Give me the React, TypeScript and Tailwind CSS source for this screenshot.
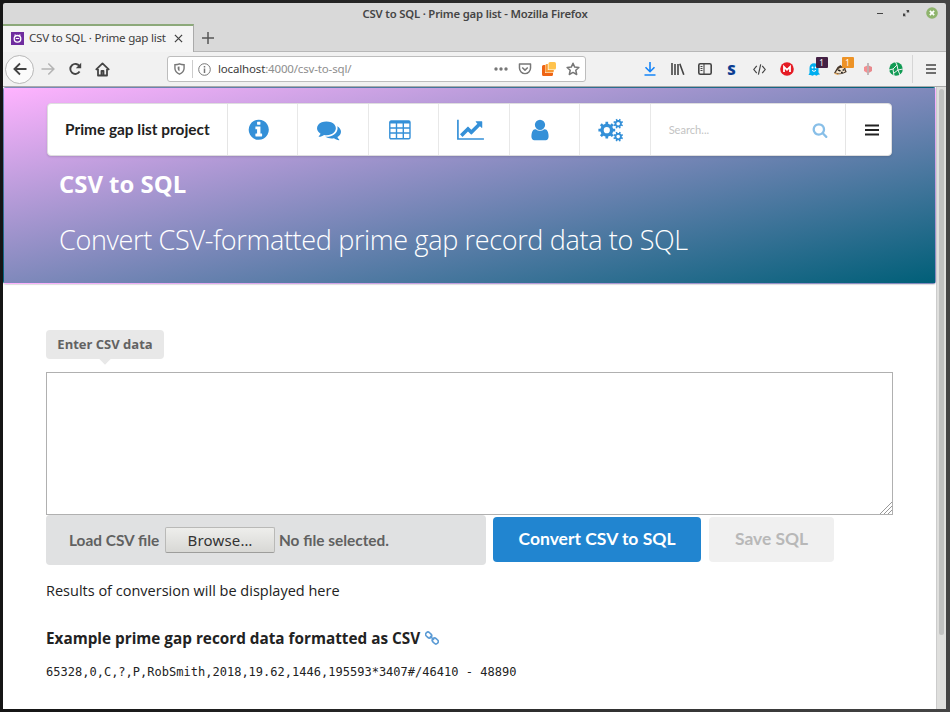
import React from 'react';

type IconProps = { d: string; box?: string; className?: string };

function Glyph({ d, box = '0 0 1792 1792', className = '' }: IconProps) {
  return (
    <svg viewBox={box} className={className} fill="currentColor">
      <path d={d} />
    </svg>
  );
}

const INFO =
  'M1152 1376v-160q0-14-9-23t-23-9h-96v-512q0-14-9-23t-23-9h-320q-14 0-23 9t-9 23v160q0 14 9 23t23 9h96v320h-96q-14 0-23 9t-9 23v160q0 14 9 23t23 9h448q14 0 23-9t9-23zm-128-896v-160q0-14-9-23t-23-9h-192q-14 0-23 9t-9 23v160q0 14 9 23t23 9h192q14 0 23-9t9-23zm640 416q0 209-103 385.5t-279.5 279.5-385.5 103-385.5-103-279.5-279.5-103-385.5 103-385.5 279.5-279.5 385.5-103 385.5 103 279.5 279.5 103 385.5z';
const COMMENTS =
  'M1408 768q0 139-94 257t-256.5 186.5-353.5 68.5q-86 0-176-16-124 88-278 128-36 9-86 16h-3q-11 0-20.5-8t-11.5-21q-1-3-1-6.5t.5-6.5 2-6l2.5-5 3.5-5.5 4-5 4.5-5 4-4.5q5-6 23-25t26-29.5 22.5-29 25-38.5 20.5-44q-124-72-195-177t-71-224q0-139 94-257t256.5-186.5 353.5-68.5 353.5 68.5 256.5 186.5 94 257zm384 256q0 120-71 224.5t-195 176.5q10 24 20.5 44t25 38.5 22.5 29 26 29.5 23 25q1 1 4 4.5t4.5 5 4 5 3.5 5.5l2.5 5 2 6 .5 6.5-1 6.5q-3 14-13 22t-22 7q-50-7-86-16-154-40-278-128-90 16-176 16-271 0-472-132 58 4 88 4 161 0 309-45t264-129q125-92 192-212t67-254q0-77-23-152 129 71 204 178t75 230z';
const CHART =
  'M2048 1536v128h-2048v-1536h128v1408h1920zm-128-1248v435q0 21-19.5 29.5t-35.5-7.5l-121-121-633 633q-10 10-23 10t-23-10l-233-233-416 416-192-192 585-585q10-10 23-10t23 10l233 233 464-464-121-121q-16-16-7.5-35.5t29.5-19.5h435q14 0 23 9t9 23z';
const USER =
  'M1536 1399q0 109-62.5 187t-150.5 78h-854q-88 0-150.5-78t-62.5-187q0-85 8.5-160.5t31.5-152 58.5-131 94-89 134.5-34.5q131 128 313 128t313-128q76 0 134.5 34.5t94 89 58.5 131 31.5 152 8.5 160.5zm-256-887q0 159-112.5 271.5t-271.5 112.5-271.5-112.5-112.5-271.5 112.5-271.5 271.5-112.5 271.5 112.5 112.5 271.5z';
const SEARCH =
  'M1216 832q0-185-131.5-316.5t-316.5-131.5-316.5 131.5-131.5 316.5 131.5 316.5 316.5 131.5 316.5-131.5 131.5-316.5zm512 832q0 52-38 90t-90 38q-54 0-90-38l-343-342q-179 124-399 124-143 0-273.5-55.5t-225-150-150-225-55.5-273.5 55.5-273.5 150-225 225-150 273.5-55.5 273.5 55.5 225 150 150 225 55.5 273.5q0 220-124 399l343 343q37 37 37 90z';

// Outline of a gear with trapezoid teeth and a round hole.
function gear(cx: number, cy: number, outer: number, inner: number, hole: number, teeth: number, turn = 0) {
  const pts: string[] = [];
  for (let i = 0; i < teeth; i++) {
    const step = (Math.PI * 2) / teeth;
    const a = i * step + turn;
    const at = (r: number, t: number) =>
      `${(cx + r * Math.cos(a + t * step)).toFixed(2)} ${(cy + r * Math.sin(a + t * step)).toFixed(2)}`;
    pts.push(at(inner, -0.27), at(outer, -0.2), at(outer, 0.2), at(inner, 0.27));
  }
  return `M${pts.join('L')}ZM${cx + hole} ${cy}A${hole} ${hole} 0 1 0 ${cx - hole} ${cy}A${hole} ${hole} 0 1 0 ${cx + hole} ${cy}Z`;
}

function Cogs() {
  return (
    <svg viewBox="0 0 26 24" className="h-6 w-[26px]" fill="currentColor" fillRule="evenodd">
      <path d={gear(8.8, 12.2, 8.5, 6.5, 3.1, 8)} />
      <path d={gear(20.2, 5.7, 5, 3.7, 1.8, 8, 0.4)} />
      <path d={gear(20.2, 18.6, 5, 3.7, 1.8, 8, 0.4)} />
    </svg>
  );
}

function TableIcon() {
  return (
    <svg viewBox="0 0 22 20" className="h-5 w-[22px]" fill="none" stroke="currentColor" strokeWidth="1.4">
      <rect x=".8" y="1" width="20.2" height="17.8" rx="1.3" />
      <path d="M1 2.2h20" strokeWidth="2.4" />
      <path d="M1 8h20M1 13h20M7.5 2v17M14.3 2v17" />
    </svg>
  );
}

const NAV = [
  <Glyph d={INFO} className="size-[23.5px]" />,
  <Glyph d={COMMENTS} className="size-[24px]" />,
  <TableIcon />,
  <Glyph d={CHART} box="0 0 2048 1792" className="h-[23.5px] w-[27px]" />,
  <Glyph d={USER} className="size-[24px]" />,
  <Cogs />,
];

function TitleBar() {
  return (
    <div className="relative h-[21px] shrink-0">
      <div className="pt-[2px] pl-px text-center text-[11.3px] leading-[17px] font-semibold tracking-[-0.18px] text-[#454545]">
        CSV to SQL · Prime gap list - Mozilla Firefox
      </div>
      <div className="absolute top-[3px] right-[8px] flex h-[14px] items-center text-[#444]">
        <span className="mt-px mr-[20px] h-[1.5px] w-[6px] bg-current" />
        <svg viewBox="0 0 8 8" className="mr-[16px] size-[7px]" fill="currentColor">
          <path d="M3.5 0H7v3.5L5.8 2.4 4.8 3.2 4 2.3l.7-.8zM0 3.4 1.2 4.6 2 3.8l1 .8-.8 1L3.5 7H0z" />
        </svg>
        <svg viewBox="0 0 14 14" className="size-[12px]">
          <circle cx="7" cy="7" r="6.8" fill="#8fb46d" />
          <path d="m4.5 4.5 5 5m0-5-5 5" stroke="#fff" strokeWidth="2" />
        </svg>
      </div>
    </div>
  );
}

function TabStrip() {
  return (
    <div className="flex h-[28px] shrink-0">
      <div className="flex w-[191px] items-center border-t-2 border-r border-t-[#8ca97a] border-r-[#aaa] bg-[#f4f4f4] pb-[2px] pl-2">
        <svg viewBox="0 0 13 13" className="size-[13px]">
          <path fill="#6f2c9f" d="M0 0h13v13H0z" />
          <circle cx="6.5" cy="6.8" r="3.3" fill="none" stroke="#fff" strokeWidth="1.3" />
          <path d="M4.8 6.5h3.4M4.5 3.6 3.8 2.5M8.5 3.6l.7-1.1" stroke="#fff" strokeWidth="1.2" />
        </svg>
        <span className="ml-[5px] w-[137px] text-[11.6px] tracking-[-0.24px] whitespace-nowrap text-[#3e3e3e]">
          CSV to SQL · Prime gap list
        </span>
        <svg viewBox="0 0 10 10" className="ml-[8px] size-[9px]" stroke="#444" strokeWidth="1.4">
          <path d="m1 1 8 8m0-8-8 8" />
        </svg>
      </div>
      <div className="flex flex-1 items-center border-b border-[#b7b7b7] pl-2">
        <svg viewBox="0 0 12 12" className="size-[12px]" stroke="#555" strokeWidth="1.5">
          <path d="M6 0v12M0 6h12" />
        </svg>
      </div>
    </div>
  );
}

function Toolbar() {
  const line = { fill: 'none', stroke: '#444', strokeWidth: 1.6 };
  return (
    <div className="relative flex h-[35px] shrink-0 items-center border-b border-[#aaa] bg-[#f1f1f1]">
      <span className="ml-[2px] flex size-[29px] items-center justify-center rounded-full border border-[#b8b8b8] bg-[#fbfbfb]">
        <svg viewBox="0 0 14 14" className="size-[14px]" {...line} strokeWidth={1.8}>
          <path d="M13.5 7h-12M7 1.5 1.4 7 7 12.5" />
        </svg>
      </span>
      <svg viewBox="0 0 14 14" className="ml-[7px] size-[14px]" fill="none" stroke="#b4b4b4" strokeWidth="1.6">
        <path d="M.5 7h12M7.3 1.5 12.8 7l-5.5 5.5" />
      </svg>
      <svg viewBox="0 0 14 14" className="ml-[13px] size-[14px]" {...line} strokeWidth={1.9}>
        <path d="M11.6 9.5A5 5 0 1 1 11.5 4.2" />
        <path d="M13.2.8v5.4H7.8z" fill="#444" stroke="none" />
      </svg>
      <svg viewBox="0 0 15 15" className="ml-[13px] size-[15px]" {...line} strokeWidth={1.8}>
        <path d="M.8 7.8 7.5 1.4l6.7 6.4M3 7v6.5h9V7M6.5 13.5V9h2v4.5" strokeLinejoin="round" />
      </svg>
      <div className="ml-[57px] flex h-[26px] w-[419px] items-center rounded-[3px] border border-[#bdbdbd] bg-white text-[#777]">
        <svg viewBox="0 0 12 13" className="ml-[6px] h-[12px] w-[11px]" fill="none" stroke="currentColor" strokeWidth="1.5">
          <path d="M1 1.8Q4 1.8 6 .9q2 .9 5 .9v4Q11 10 6 12.1 1 10 1 5.8z" />
          <path d="M4 4v2.3Q4 8 6 9V3.8z" fill="currentColor" stroke="none" />
        </svg>
        <span className="ml-[7px] h-[18px] w-px bg-[#ccc]" />
        <svg viewBox="0 0 13 13" className="ml-[5px] size-[13px]" fill="none" stroke="currentColor">
          <circle cx="6.5" cy="6.5" r="5.8" />
          <path d="M6.5 5.5V10M6.5 3v1.4" strokeWidth="1.5" />
        </svg>
        <span className="ml-[7px] w-[140px] text-[11.5px] tracking-[-0.16px] whitespace-nowrap text-[#8e8e8e]">
          <span className="text-[#3c3c3c]">localhost</span>:4000/csv-to-sql/
        </span>
        <svg viewBox="0 0 14 4" className="ml-[136px] h-[4px] w-[14px]" fill="currentColor">
          <circle cx="2" cy="2" r="1.7" />
          <circle cx="7" cy="2" r="1.7" />
          <circle cx="12" cy="2" r="1.7" />
        </svg>
        <svg viewBox="0 0 14 13" className="ml-[10px] h-[12px] w-[14px]" fill="none" stroke="currentColor" strokeWidth="1.6">
          <path d="M1 1h12v4.5a6 6 0 0 1-12 0zM4 4.8l3 2.9 3-2.9" strokeLinejoin="round" />
        </svg>
        <svg viewBox="0 0 14 14" className="ml-[10px] size-[14px]">
          <path d="M0 4.5Q0 3 1.5 3H3v8h8v1.5q0 1.5-1.5 1.5h-8Q0 14 0 12.5z" fill="#ee6415" />
          <path d="M3.3 3.5Q3.3 2 4.8 2h1v6h6v1q0 1.5-1.5 1.5h-7z" fill="#f99630" />
          <path d="M6.5 1.5Q6.5 0 8 0h4.5Q14 0 14 1.5V6q0 1.5-1.5 1.5h-6z" fill="#ffc34d" />
        </svg>
        <svg viewBox="0 0 14 14" className="ml-[10px] size-[14px]" fill="none" stroke="currentColor" strokeWidth="1.5">
          <path d="m7 1.2 1.7 3.9 4.2.4-3.1 2.8.9 4.2L7 10.4l-3.7 2.1.9-4.2L1.1 5.5l4.2-.4z" strokeLinejoin="round" />
        </svg>
      </div>

      <div className="ml-[58px] flex items-center">
        <svg viewBox="0 0 12 14" className="h-[14px] w-[12px]" fill="none" stroke="#1685f8" strokeWidth="1.6">
          <path d="M6 0v9.5M1.5 5.2 6 9.7l4.5-4.5M.5 13h11" />
        </svg>
        <svg viewBox="0 0 14 12" className="ml-[14.5px] h-[12px] w-[14px]" {...line}>
          <path d="M1 0v12M4 1v11M7 1v11M8.8.8l4 11" />
        </svg>
        <svg viewBox="0 0 14 12" className="ml-[13px] h-[12px] w-[14px]" {...line}>
          <rect x=".8" y=".8" width="12.4" height="10.4" rx="1.5" />
          <path d="M6 1v10M2.5 3.5h2M2.5 5.5h2M2.5 7.5h2" strokeWidth="1.1" />
        </svg>
        <span className="ml-[14px] w-[12px] text-center font-['Noto_Sans',sans-serif] text-[14.5px] leading-[15px] font-black text-[#0b3d91]">S</span>
        <svg viewBox="0 0 14 12" className="ml-[15px] h-[11px] w-[13px]" {...line} strokeWidth={1.3}>
          <path d="M4 2 .8 6 4 10M10 2l3.2 4-3.2 4M8.3.5 5.8 11.5" />
        </svg>
        <svg viewBox="0 0 14 14" className="ml-[14px] size-[14px]">
          <circle cx="7" cy="7" r="6.8" fill="#e51b24" />
          <path d="M4 10V4.8l3 3 3-3V10" fill="none" stroke="#fff" strokeWidth="1.8" />
        </svg>
        <div className="relative ml-[14px] h-[14px] w-[12px]">
          <svg viewBox="0 0 12 14" className="h-[14px] w-[12px]">
            <path d="M1.5 6a4.5 4.8 0 0 1 9 0v4.5l1.5 2-2 .2-1.5 1-2-1-2 1-2-.8-2 .1 1-2z" fill="#00aef0" />
            <circle cx="4.5" cy="5.5" r="1" fill="#fff" />
            <circle cx="7.7" cy="5.5" r="1" fill="#fff" />
            <path d="M4 8.4q2 2 4 0" stroke="#fff" fill="none" />
          </svg>
          <span className="absolute -top-[5px] left-[8px] h-[11px] w-[12px] rounded-[1px] bg-[#432044] text-center text-[8px] leading-[11px] text-white">1</span>
        </div>
        <div className="relative ml-[14px] h-[14px] w-[14px]">
          <svg viewBox="0 0 14 14" className="size-[14px]">
            <path d="M0 11 3.5 5l3-2 1.5 1.6L11.5 4v3l1.2 3-2.7 1.2Q7 12.6 4 12z" fill="#4a3a2c" />
            <path d="M1.5 10.4 5 6.4l2-.6 3 .4 1.2 3.3-3 1.8-3.4.2z" fill="#f6e6cf" />
            <path d="m4.2 8 2.3 1M8.6 8.4l1.8-.8M7 10.5h1.8" stroke="#222" strokeWidth="1.5" />
            <path d="m.5 11.4 4 1.2" stroke="#e49a3b" />
          </svg>
          <span className="absolute -top-[5px] left-[8px] h-[11px] w-[12px] rounded-[1px] bg-[#ed9327] text-center text-[8px] leading-[11px] text-white">1</span>
        </div>
        <svg viewBox="0 0 10 12" className="ml-[15px] h-[12px] w-[10px]">
          <path d="M4.3 2.5 1 4v4l3.3 2z" fill="#f58e91" />
          <path d="M5.7 2.5 9 4v4L5.7 10z" fill="#e8898e" />
          <path d="M5 0v12" stroke="#a79a9b" strokeWidth="1.3" />
        </svg>
        <svg viewBox="0 0 14 14" className="ml-[16px] size-[14px]">
          <circle cx="7" cy="7" r="6.8" fill="#119b54" />
          <path d="m0 8 4-1 4-4 1 5 5-1M8 3 6.5 0M4 7l1 7M9 8l-4 3M9 8l2 5" fill="none" stroke="#f1f1f1" strokeWidth="1" />
        </svg>
      </div>
      <span className="ml-[9px] h-[28px] w-px bg-[#d6d6d6]" />
      <svg viewBox="0 0 11 11" className="ml-[13px] size-[10px]" stroke="#444" strokeWidth="1.6">
        <path d="M0 1.2h11M0 5.5h11M0 9.8h11" />
      </svg>
    </div>
  );
}

function Hero() {
  return (
    <header className="h-[197px] rounded-[3px] border border-transparent bg-linear-to-br/srgb from-[#ffb3ff] to-[#005f78] pt-[15px] pl-[43px] shadow-[0_1px_1px_#ddd]">
      <nav className="flex h-[53px] w-[845px] rounded-[4px] border border-[#dededf] bg-white font-['Lato',sans-serif] shadow-[0_1px_2px_rgba(34,36,38,.15)]">
        <div className="flex w-[180px] items-center border-r border-[#e5e5e5] pl-[17px] text-[15.4px] font-bold whitespace-nowrap text-[#222]">
          Prime gap list project
        </div>
        {NAV.map((icon, i) => (
          <a key={i} className="flex w-[70.45px] items-center justify-center border-r border-[#e8e8e8] pr-[8px] text-[#3490d8]">
            {icon}
          </a>
        ))}
        <div className="flex w-[195.3px] items-center border-r border-[#e5e5e5] pl-[18px] text-[#c3c3c3]">
          <span className="w-[143px] pt-px text-[11.1px]">Search...</span>
          <Glyph d={SEARCH} className="size-[16px] text-[#88bfe8]" />
        </div>
        <div className="flex flex-1 items-center justify-center pl-[7px]">
          <svg viewBox="0 0 14 12" className="h-[12px] w-[14px]" stroke="#222" strokeWidth="2">
            <path d="M0 1.5h14M0 6h14M0 10.5h14" />
          </svg>
        </div>
      </nav>
      <h1 className="mt-[10px] ml-[12px] text-[23.9px] leading-[36px] font-bold text-white">CSV to SQL</h1>
      <p className="mt-[18px] ml-[12px] text-[27px] leading-[40px] font-light tracking-[-0.34px] whitespace-nowrap text-white">
        Convert CSV-formatted prime gap record data to SQL
      </p>
    </header>
  );
}

function Converter() {
  return (
    <main className="flex flex-col items-start pt-[46px] pl-[43px] text-[#222]">
      <label className="relative h-[29px] w-[118px] rounded-[4px] bg-[#e8e8e8] text-center text-[13px] leading-[29px] font-bold text-[#626262]">
        Enter CSV data
        <span className="absolute bottom-[-4px] left-[55px] size-[8px] rotate-45 bg-[#e8e8e8]" />
      </label>
      <div className="mt-[13px] flex h-[143px] w-[847px] items-end justify-end border border-[#b0b0b0] bg-white">
        <svg viewBox="0 0 12 12" className="size-[12px]" stroke="#999" strokeWidth="1">
          <path d="M0 12 12 0M4 12l8-8M8 12l4-4" />
        </svg>
      </div>
      <div className="flex font-['Lato',sans-serif] font-bold">
        <div className="flex h-[50px] w-[440px] items-center rounded-[4px] bg-[#e0e1e2] pl-[23px] text-[15.4px] whitespace-nowrap text-[#616161]">
          <span className="w-[96px] pt-[2px]">Load CSV file</span>
          <button className="h-[26px] w-[110px] rounded-[2px] border border-[#b9b9b7] border-b-[#9d9d9b] bg-linear-to-b from-[#eeeeec] to-[#d8d8d5] pb-px font-['Noto_Sans',sans-serif] text-[15px] leading-[24px] font-normal tracking-[0.2px] text-[#333]">
            Browse…
          </button>
          <span className="ml-[4px] pt-[2px]">No file selected.</span>
        </div>
        <button className="mt-[2px] ml-[7px] h-[45px] w-[208px] rounded-[4px] bg-[#2185d0] text-[17.5px] text-white">Convert CSV to SQL</button>
        <button className="mt-[2px] ml-[8px] h-[45px] w-[125px] rounded-[4px] bg-[#f0f0f0] text-[17.4px] text-[#b8b8b8]">Save SQL</button>
      </div>
      <p className="mt-[15px] text-[14.5px] leading-[22px]">Results of conversion will be displayed here</p>
      <h2 className="mt-[24px] flex items-center text-[15.3px] leading-[24px] font-bold whitespace-nowrap">
        Example prime gap record data formatted as CSV
        <svg viewBox="0 0 14 14" className="ml-[5px] size-[14px]" fill="none" stroke="#5b9bd5" strokeWidth="1.6">
          <rect x=".4" y="1.8" width="6.5" height="4.6" rx="2.2" transform="rotate(45 3.7 4.1)" />
          <rect x="7" y="7.6" width="6.5" height="4.6" rx="2.2" transform="rotate(45 10.2 9.9)" />
          <path d="m5 5 4 4" />
        </svg>
      </h2>
      <code className="mt-[13px] font-['DejaVu_Sans_Mono',monospace] text-[12px] leading-[18px] tracking-[0.012px] whitespace-pre">
        65328,0,C,?,P,RobSmith,2018,19.62,1446,195593*3407#/46410 - 48890
      </code>
    </main>
  );
}

export default function App() {
  return (
    <div className="h-[712px] w-[950px] overflow-hidden bg-[#262626] bg-linear-to-r from-[#151515] to-[#444] pt-[3px] pl-[3px] font-['Open_Sans',sans-serif]">
      <div className="flex h-[706px] w-[943px] flex-col overflow-hidden rounded-t-[2px] bg-[#d9d9d9]">
        <div className="flex shrink-0 flex-col font-['Noto_Sans',sans-serif]">
          <TitleBar />
          <TabStrip />
          <Toolbar />
        </div>
        <div className="flex min-h-0 flex-1">
          <div className="w-[933px] bg-white">
            <Hero />
            <Converter />
          </div>
          <div className="flex flex-1 justify-center border-l border-[#ccc] bg-[#dfdfdd] pt-[2px]">
            <div className="h-[546px] w-[5px] rounded-full bg-[#c0c1c0]" />
          </div>
        </div>
      </div>
    </div>
  );
}
